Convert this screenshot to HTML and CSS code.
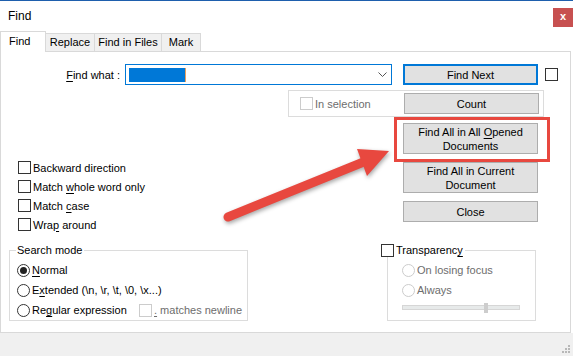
FILE: index.html
```html
<!doctype html>
<html lang="en">
<head>
    <meta charset="UTF-8">
    <meta name="viewport" content="width=device-width, initial-scale=1.0">
    <title>Find</title>
    <link rel="stylesheet" href="styles.css">
</head>
<body>
<div class="window">
    <div class="titlebar">
        <span class="title">Find</span>
        <span class="close-x">x</span>
    </div>

    <div class="tabs">
        <div class="tab active">Find</div>
        <div class="tab tab-replace">Replace</div>
        <div class="tab tab-files">Find in Files</div>
        <div class="tab tab-mark">Mark</div>
    </div>

    <div class="panel">
        <div class="find-row">
            <label class="find-label"><u>F</u>ind what :</label>
            <div class="combo">
                <span class="selected-text"></span><span class="text-caret"></span>
                <svg class="chevron" width="9" height="5" viewBox="0 0 9 5">
                    <path d="M0.5 0.5 L4.5 4.5 L8.5 0.5" fill="none" stroke="#555"/>
                </svg>
            </div>
            <button class="btn btn-default">Find Next</button>
            <span class="check"></span>
        </div>

        <div class="selection-group">
            <span class="check disabled"></span>
            <span class="muted">In selection</span>
            <button class="btn btn-count">Count</button>
        </div>

        <div class="middle">
            <div class="options">
                <div class="option"><span class="check"></span><span>Backward direction</span></div>
                <div class="option"><span class="check"></span><span>Match <u>w</u>hole word only</span></div>
                <div class="option"><span class="check"></span><span>Match <u>c</u>ase</span></div>
                <div class="option"><span class="check"></span><span>Wra<u>p</u> around</span></div>
            </div>
            <div class="actions">
                <button class="btn btn-tall">Find All in All <u>O</u>pened<br>Documents</button>
                <button class="btn btn-tall">Find All in Current<br>Document</button>
                <button class="btn">Close</button>
            </div>
        </div>

        <div class="groups">
            <div class="group search-mode">
                <div class="group-title">Search mode</div>
                <div class="radios">
                    <div class="option"><span class="radio checked"></span><span><u>N</u>ormal</span></div>
                    <div class="option"><span class="radio"></span><span>E<u>x</u>tended (\n, \r, \t, \0, \x...)</span></div>
                    <div class="option">
                        <span class="radio"></span><span class="regex-label">Re<u>g</u>ular expression</span>
                        <span class="check disabled"></span><span class="muted"><u>.</u> matches newline</span>
                    </div>
                </div>
            </div>
            <div class="group transparency">
                <div class="group-title"><span class="check"></span><span>Transparenc<u>y</u></span></div>
                <div class="radios">
                    <div class="option muted"><span class="radio disabled"></span><span>On losing focus</span></div>
                    <div class="option muted"><span class="radio disabled"></span><span>Always</span></div>
                </div>
                <div class="slider"><span class="thumb"></span></div>
            </div>
        </div>
    </div>

    <div class="footer">
        <svg class="grip" width="11" height="11" viewBox="0 0 11 11">
            <rect x="7" y="1" width="2" height="2"/>
            <rect x="4" y="4" width="2" height="2"/>
            <rect x="7" y="4" width="2" height="2"/>
            <rect x="1" y="7" width="2" height="2"/>
            <rect x="4" y="7" width="2" height="2"/>
            <rect x="7" y="7" width="2" height="2"/>
        </svg>
    </div>

    <!-- annotation on top of the dialog -->
    <div class="highlight"></div>
    <svg class="arrow" width="573" height="356" viewBox="0 0 573 356">
        <line x1="228" y1="217" x2="366" y2="161" stroke="#e8483f" stroke-width="9" stroke-linecap="round"/>
        <polygon points="389,151 357,149 367,176" fill="#e8483f"/>
    </svg>
</div>
</body>
</html>
```

FILE: styles.css
```css
* {
    box-sizing: border-box;
}

body {
    margin: 0;
    background: #fff;
    font-family: "Liberation Sans", Arial, sans-serif;
    font-size: 11px;
    color: #000;
    white-space: nowrap;
}

u {
    text-decoration-thickness: 1px;
    text-underline-offset: 2px;
}

.window {
    position: relative;
    width: 573px;
    height: 356px;
    border-top: 1px solid #1e5fad;
    overflow: hidden;
}

/* Title bar */
.titlebar {
    height: 30px;
    display: flex;
    justify-content: space-between;
    align-items: flex-start;
}

.title {
    margin: 8px 0 0 8px;
    font-size: 12px;
    line-height: 14px;
}

.close-x {
    margin-top: 7px;
    width: 20px;
    height: 19px;
    background: #c75050;
    color: #fff;
    font-weight: bold;
    font-size: 11px;
    line-height: 17px;
    text-align: center;
}

/* Tabs */
.tabs {
    position: relative;
    display: flex;
    align-items: flex-end;
    height: 21px;
    margin-bottom: -1px;
}

.tab {
    height: 18px;
    margin-bottom: 1px;
    background: #f0f0f0;
    border-top: 1px solid #d9d9d9;
    border-right: 1px solid #d9d9d9;
    text-align: center;
    line-height: 17px;
}

.tab.active {
    position: relative;
    width: 46px;
    height: 21px;
    margin-bottom: 0;
    padding: 1px 0 0 8px;
    background: #fff;
    border-left: 1px solid #d9d9d9;
    text-align: left;
}

.tab-replace { width: 49px; }
.tab-files { width: 67px; }
.tab-mark { width: 39px; }

/* Tab page */
.panel {
    width: 571px;
    height: 282px;
    border: 1px solid #d9d9d9;
    background: #fff;
}

.find-row {
    display: flex;
    align-items: center;
    height: 21px;
    margin-top: 12px;
}

.find-label {
    width: 119px;
    margin-right: 1px;
    text-align: right;
}

.combo {
    display: flex;
    align-items: center;
    width: 267px;
    height: 21px;
    margin-left: 4px;
    padding-left: 3px;
    border: 1px solid #0078d7;
}

.selected-text {
    width: 56px;
    height: 14px;
    background: #0078d7;
}

.text-caret {
    width: 1px;
    height: 14px;
    background: #e8a060;
}

.chevron {
    margin-left: auto;
    margin-right: 4px;
}

.btn {
    height: 21px;
    padding: 0;
    background: #e1e1e1;
    border: 1px solid #adadad;
    font: inherit;
    color: #000;
    line-height: 14px;
}

.btn-default {
    width: 135px;
    margin-left: 11px;
    border: 2px solid #0078d7;
}

.find-row .check {
    margin-left: 7px;
}

.check {
    display: inline-block;
    flex: none;
    width: 13px;
    height: 13px;
    border: 1px solid #333;
    background: #fff;
}

.check.disabled {
    border-color: #cccccc;
}

.muted {
    color: #6d6d6d;
}

.selection-group {
    display: flex;
    align-items: center;
    width: 256px;
    height: 27px;
    margin: 5px 0 0 287px;
    padding-left: 11px;
    border: 1px solid #dcdcdc;
}

.selection-group .check {
    margin-right: 2px;
}

.btn-count {
    width: 135px;
    margin-left: auto;
    margin-right: 4px;
}

/* Options and action buttons */
.middle {
    display: grid;
    grid-template-columns: 402px 135px;
    height: 117px;
}

.options {
    padding: 41px 0 0 17px;
}

.option {
    display: flex;
    align-items: center;
    height: 19px;
}

.option .check,
.option .radio {
    margin-right: 2px;
}

.actions {
    display: flex;
    flex-direction: column;
    gap: 8px;
    padding-top: 6px;
}

.actions .btn {
    width: 135px;
}

.btn-tall {
    height: 31px;
}

/* Group boxes */
.groups {
    display: flex;
    align-items: flex-start;
    margin-top: 16px;
}

.group {
    height: 71px;
    border: 1px solid #dcdcdc;
}

.group-title {
    display: flex;
    align-items: center;
    width: fit-content;
    height: 14px;
    margin-top: -8px;
    padding: 0 2px 0 1px;
    background: #fff;
    line-height: 14px;
}

.search-mode {
    width: 239px;
    margin-left: 8px;
}

.search-mode .group-title {
    margin-left: 6px;
}

.transparency {
    width: 149px;
    margin-left: 139px;
}

.transparency .group-title {
    margin-left: -7px;
    padding-left: 0;
}

.transparency .group-title .check {
    margin-right: 2px;
}

.radios {
    padding-top: 3px;
}

.radios .option {
    height: 20px;
}

.search-mode .radios {
    padding-left: 7px;
}

.transparency .radios {
    padding-left: 14px;
}

.radio {
    display: inline-flex;
    align-items: center;
    justify-content: center;
    flex: none;
    width: 13px;
    height: 13px;
    border: 1px solid #333;
    border-radius: 50%;
    background: #fff;
}

.radio.checked::after {
    content: "";
    width: 7px;
    height: 7px;
    border-radius: 50%;
    background: #222;
}

.radio.disabled {
    border-color: #cccccc;
}

.regex-label {
    width: 107px;
}

.search-mode .check.disabled {
    margin-right: 2px;
}

.slider {
    position: relative;
    width: 118px;
    height: 5px;
    margin: 5px 0 0 14px;
    background: #e7eaea;
    border: 1px solid #d6d6d6;
}

.thumb {
    position: absolute;
    left: 81px;
    top: -3px;
    width: 4px;
    height: 10px;
    background: #cdcdcd;
}

/* Bottom strip with size grip */
.footer {
    display: flex;
    justify-content: flex-end;
    align-items: flex-end;
    height: 23px;
    background: #f0f0f0;
}

.grip {
    fill: #b8b8b8;
    margin: 0 1px 1px 0;
}

/* Red annotation */
.highlight {
    position: absolute;
    left: 394px;
    top: 116px;
    width: 156px;
    height: 45px;
    border: 3px solid #e8483f;
}

.arrow {
    position: absolute;
    left: 0;
    top: -1px;
    filter: drop-shadow(1px 2px 2px rgba(0, 0, 0, 0.35));
    pointer-events: none;
}
```
